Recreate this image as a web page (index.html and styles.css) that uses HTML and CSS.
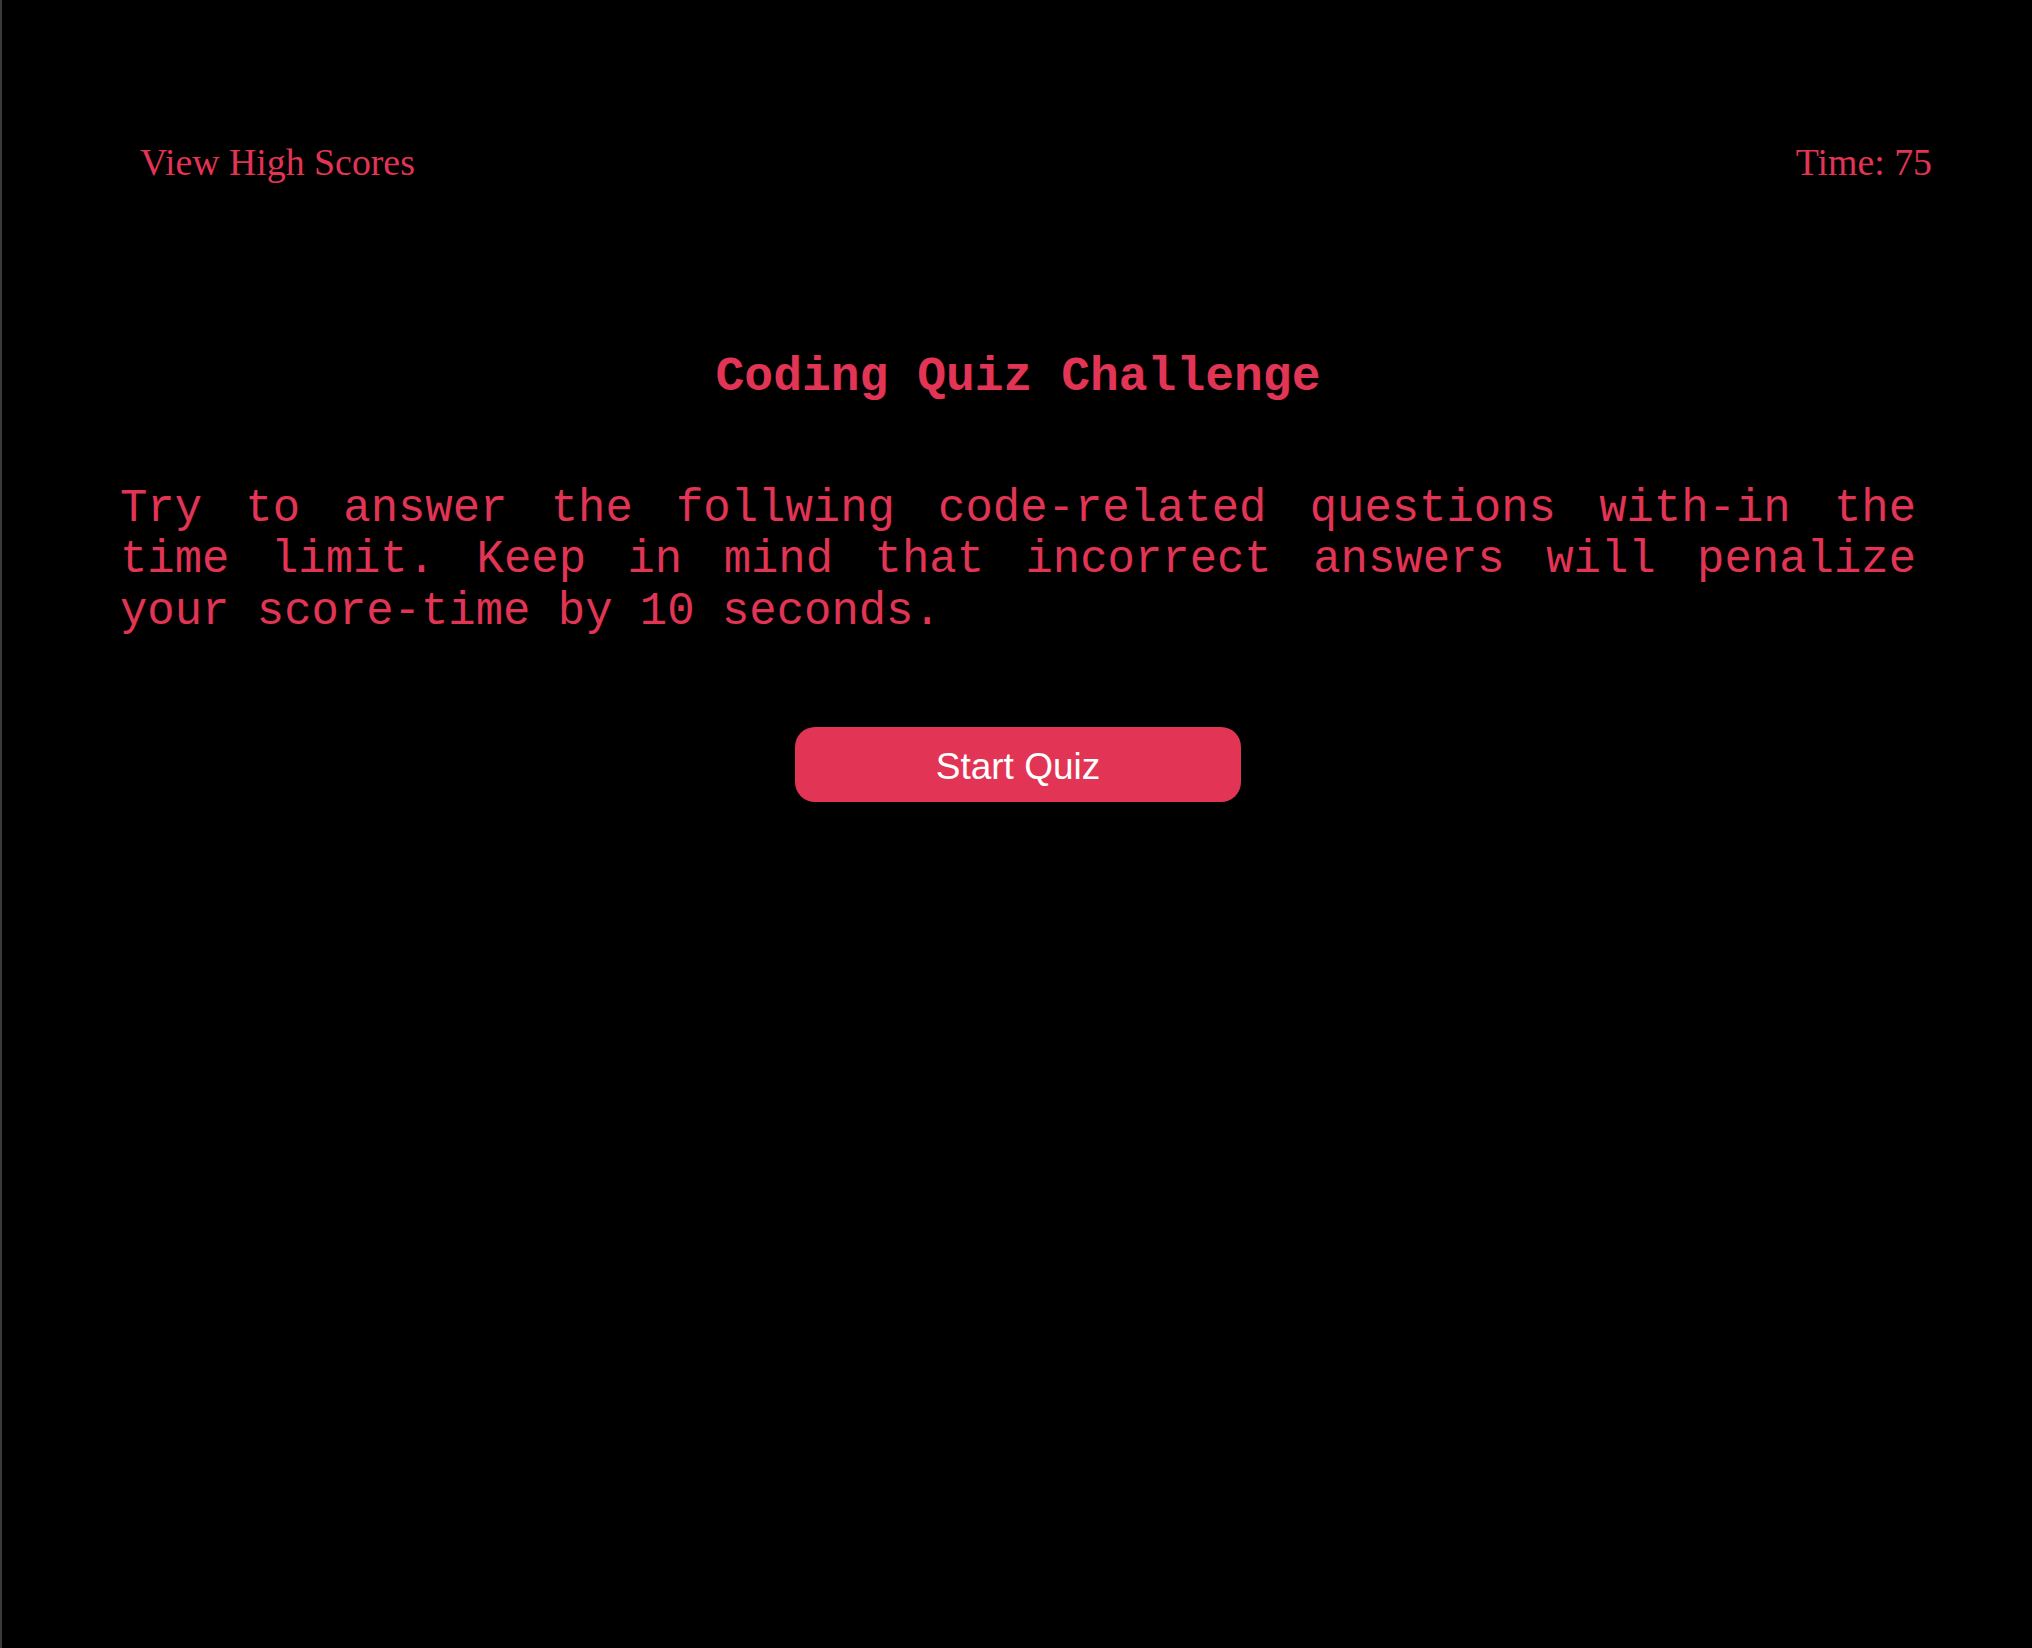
FILE: index.html
```html
<!DOCTYPE html>
<html lang="en">
<head>
<meta charset="utf-8">
<title>Coding Quiz Challenge</title>
<link rel="stylesheet" href="styles.css">
</head>
<body>
<div class="page">
  <header class="top-bar">
    <a class="high-scores" href="#">View High Scores</a>
    <span class="timer">Time: 75</span>
  </header>
  <main class="intro">
    <h1 class="title">Coding Quiz Challenge</h1>
    <p class="rules">Try to answer the follwing code-related questions with-in the time limit. Keep in mind that incorrect answers will penalize your score-time by 10 seconds.</p>
    <button class="start-btn" type="button">Start Quiz</button>
  </main>
</div>
</body>
</html>
```
FILE: styles.css
```css
html, body {
  margin: 0;
  padding: 0;
  background: #000;
}

.page {
  min-height: 1648px;
  box-sizing: border-box;
  border-left: 2px solid #3a3a3a;
  background: #000;
  color: #e23454;
}

.top-bar {
  display: flex;
  justify-content: space-between;
  align-items: baseline;
  padding: 140px 100px 0 138px;
  font-family: "Liberation Serif", "Times New Roman", serif;
  font-size: 37.8px;
}

.high-scores {
  color: #e23454;
  text-decoration: none;
}

.timer {
  color: #e23454;
}

.intro {
  display: flex;
  flex-direction: column;
  align-items: center;
  padding: 0 116px 0 118px;
}

.title {
  margin: 166px 0 0;
  font-family: "Courier New", "Liberation Mono", monospace;
  font-size: 48px;
  font-weight: bold;
  line-height: normal;
  text-align: center;
}

.rules {
  align-self: stretch;
  margin: 80px 0 0;
  font-family: "Courier New", "Liberation Mono", monospace;
  font-size: 45.6px;
  line-height: 51.4px;
  text-align: justify;
}

.start-btn {
  margin-top: 89px;
  width: 446px;
  height: 75px;
  padding: 4px 0 0;
  border: none;
  border-radius: 20px;
  background: #e23454;
  color: #fff;
  font-family: "Liberation Sans", Arial, sans-serif;
  font-size: 37px;
  cursor: pointer;
}
```
